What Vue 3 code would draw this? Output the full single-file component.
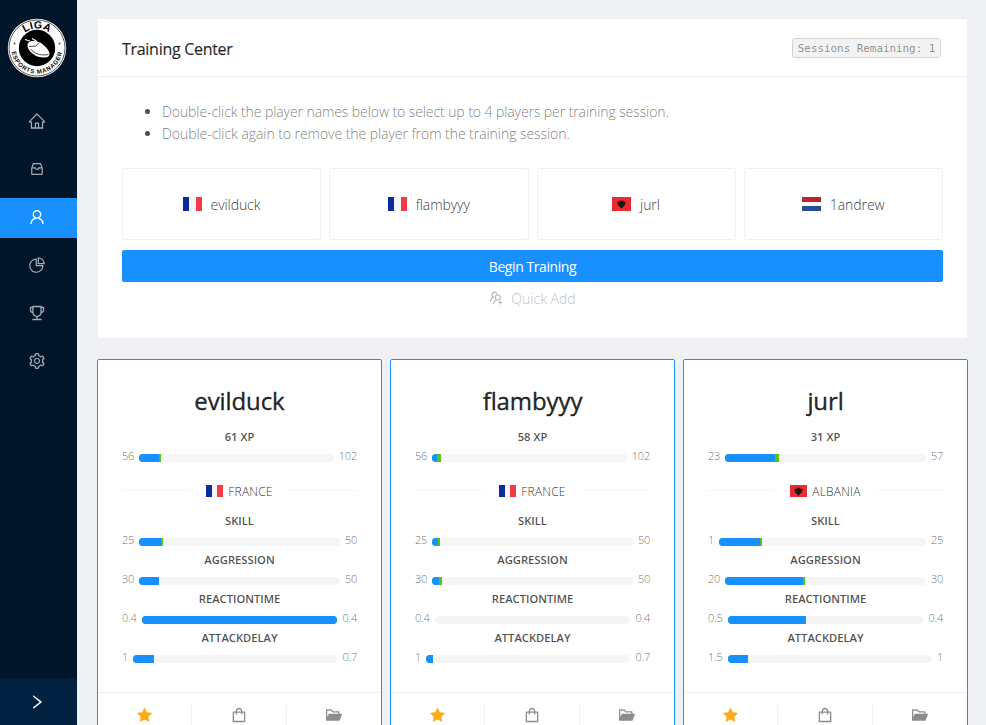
<script setup>
const icons = {
  home: 'M946.5 505L560.1 118.8l-25.9-25.9a31.5 31.5 0 0 0-44.4 0L77.5 505a63.9 63.9 0 0 0-18.8 46c.4 35.2 29.7 63.3 64.9 63.3h42.5V940h691.8V614.3h43.4c17.1 0 33.2-6.7 45.3-18.8a63.6 63.6 0 0 0 18.7-45.3c0-17-6.7-33.1-18.8-45.2zM568 868H456V664h112v204zm217.9-325.7V868H632V640c0-22.1-17.9-40-40-40H432c-22.1 0-40 17.9-40 40v228H238.1V542.3h-96l370-369.7 23.1 23.1L882 542.3h-96.1z',
  inbox: 'M885.2 446.3l-.2-.8-112.2-285.1c-5-16.1-19.9-27.2-36.8-27.2H281.2c-17 0-32.1 11.3-36.9 27.6L139.4 443l-.3.7-.2.8c-1.3 4.9-1.7 9.9-1 14.8-.1 1.6-.2 3.2-.2 4.8V830a60.9 60.9 0 0 0 60.8 60.8h627.2c33.5 0 60.8-27.3 60.9-60.8V464.1c0-1.3 0-2.6-.1-3.7.4-4.9 0-9.6-1.3-14.1zm-295.8-43l-.3 15.7c-.8 44.9-31.8 75.1-77.1 75.1-22.1 0-41.1-7.1-54.8-20.6S436 441.2 435.6 419l-.3-15.7H229.5L309 210h399.2l81.7 193.3H589.4zm-375 76.8h157.3c24.3 57.1 76 90.8 140.4 90.8 33.7 0 65-9.4 90.3-27.2 22.2-15.6 39.5-37.4 50.7-63.6h156.5V814H214.4V480.1z',
  user: 'M858.5 763.6a374 374 0 0 0-80.6-119.5 375.63 375.63 0 0 0-119.5-80.6c-.4-.2-.8-.3-1.2-.5C719.5 518 760 444.7 760 362c0-137-111-248-248-248S264 225 264 362c0 82.7 40.5 156 102.8 201.1-.4.2-.8.3-1.2.5-44.8 18.9-85 46-119.5 80.6a375.63 375.63 0 0 0-80.6 119.5A371.7 371.7 0 0 0 136 901.8a8 8 0 0 0 8 8.2h60c4.4 0 7.9-3.5 8-7.8 2-77.2 33-149.5 87.8-204.3 56.7-56.7 132-87.9 212.2-87.9s155.5 31.2 212.2 87.9C779 752.7 810 825 812 902.2c.1 4.4 3.6 7.8 8 7.8h60a8 8 0 0 0 8-8.2c-1-47.8-10.9-94.3-29.5-138.2zM512 534c-45.9 0-89.1-17.9-121.6-50.4S340 407.9 340 362c0-45.9 17.9-89.1 50.4-121.6S466.1 190 512 190s89.1 17.9 121.6 50.4S684 316.1 684 362c0 45.9-17.9 89.1-50.4 121.6S557.9 534 512 534z',
  pie: 'M864 518H506V160c0-4.4-3.6-8-8-8h-26a398.46 398.46 0 0 0-282.8 117.1 398.19 398.19 0 0 0-85.7 127.1A397.61 397.61 0 0 0 72 552a398.46 398.46 0 0 0 117.1 282.8c36.7 36.7 79.5 65.6 127.1 85.7A397.61 397.61 0 0 0 472 952a398.46 398.46 0 0 0 282.8-117.1c36.7-36.7 65.6-79.5 85.7-127.1A397.61 397.61 0 0 0 872 552v-26c0-4.4-3.6-8-8-8zM705.7 787.8A331.59 331.59 0 0 1 470.4 884c-88.1-.4-170.9-34.9-233.2-97.2C174.5 724.1 140 640.7 140 552c0-88.7 34.5-172.1 97.2-234.8 54.6-54.6 124.9-87.9 200.8-95.5V586h364.3c-7.7 76.3-41.3 147-96.6 201.8zM952 462.4l-2.6-28.2c-8.5-92.1-49.4-179-115.2-244.6A399.4 399.4 0 0 0 589 74.6L560.7 72c-4.7-.4-8.7 3.2-8.7 7.9V464c0 4.4 3.6 8 8 8l384-1c4.7 0 8.4-4 8-8.6zm-332.2-58.2V147.6a332.24 332.24 0 0 1 166.4 89.8c45.7 45.6 77 103.6 90 166.1l-256.4.7z',
  trophy: 'M868 160h-92v-40c0-4.4-3.6-8-8-8H256c-4.4 0-8 3.6-8 8v40h-92a44 44 0 0 0-44 44v148c0 81.7 60 149.6 138.2 162C265.7 630.2 359 721.7 476 734.5v105.2H280c-17.7 0-32 14.3-32 32V904c0 4.4 3.6 8 8 8h512c4.4 0 8-3.6 8-8v-32.3c0-17.7-14.3-32-32-32H548V734.5C665 721.7 758.3 630.2 773.8 514 852 501.6 912 433.7 912 352V204a44 44 0 0 0-44-44zM184 352V232h64v207.6a91.99 91.99 0 0 1-64-87.6zm520 128c0 49.1-19.1 95.4-53.9 130.1-34.8 34.8-81 53.9-130.1 53.9h-16c-49.1 0-95.4-19.1-130.1-53.9-34.8-34.8-53.9-81-53.9-130.1V184h384v296zm136-128c0 41-26.9 75.8-64 87.6V232h64v120z',
  setting: 'M924.8 625.7l-65.5-56c3.1-19 4.7-38.4 4.7-57.8s-1.6-38.8-4.7-57.8l65.5-56a32.03 32.03 0 0 0 9.3-35.2l-.9-2.6a443.74 443.74 0 0 0-79.7-137.9l-1.8-2.1a32.12 32.12 0 0 0-35.1-9.5l-81.3 28.9c-30-24.6-63.5-44-99.7-57.6l-15.7-85a32.05 32.05 0 0 0-25.8-25.7l-2.7-.5c-52.1-9.4-106.9-9.4-159 0l-2.7.5a32.05 32.05 0 0 0-25.8 25.7l-15.8 85.4a351.86 351.86 0 0 0-99 57.4l-81.9-29.1a32 32 0 0 0-35.1 9.5l-1.8 2.1a446.02 446.02 0 0 0-79.7 137.9l-.9 2.6c-4.5 12.5-.8 26.5 9.3 35.2l66.3 56.6c-3.1 18.8-4.6 38-4.6 57.1 0 19.2 1.5 38.4 4.6 57.1L99 625.5a32.03 32.03 0 0 0-9.3 35.2l.9 2.6c18.1 50.4 44.9 96.9 79.7 137.9l1.8 2.1a32.12 32.12 0 0 0 35.1 9.5l81.9-29.1c29.8 24.5 63.1 43.9 99 57.4l15.8 85.4a32.05 32.05 0 0 0 25.8 25.7l2.7.5a449.4 449.4 0 0 0 159 0l2.7-.5a32.05 32.05 0 0 0 25.8-25.7l15.7-85a350 350 0 0 0 99.7-57.6l81.3 28.9a32 32 0 0 0 35.1-9.5l1.8-2.1c34.8-41.1 61.6-87.5 79.7-137.9l.9-2.6c4.5-12.3.8-26.3-9.3-35zM788.3 465.9c2.5 15.1 3.8 30.6 3.8 46.1s-1.3 31-3.8 46.1l-6.6 40.1 74.7 63.9a370.03 370.03 0 0 1-42.6 73.6L721 702.8l-31.4 25.8c-23.9 19.6-50.5 35-79.3 45.8l-38.1 14.3-17.9 97a377.5 377.5 0 0 1-85 0l-17.9-97.2-37.8-14.5c-28.5-10.8-55-26.2-78.7-45.7l-31.4-25.9-93.4 33.2c-17-22.9-31.2-47.6-42.6-73.6l75.5-64.5-6.5-40c-2.4-14.9-3.7-30.3-3.7-45.5 0-15.3 1.2-30.6 3.7-45.5l6.5-40-75.5-64.5c11.3-26.1 25.6-50.7 42.6-73.6l93.4 33.2 31.4-25.9c23.7-19.5 50.2-34.9 78.7-45.7l37.9-14.3 17.9-97.2c28.1-3.2 56.8-3.2 85 0l17.9 97 38.1 14.3c28.7 10.8 55.4 26.2 79.3 45.8l31.4 25.8 92.8-32.9c17 22.9 31.2 47.6 42.6 73.6L781.8 426l6.5 39.9zM512 326c-97.2 0-176 78.8-176 176s78.8 176 176 176 176-78.8 176-176-78.8-176-176-176zm79.2 255.2A111.6 111.6 0 0 1 512 614c-29.9 0-58-11.7-79.2-32.8A111.6 111.6 0 0 1 400 502c0-29.9 11.7-58 32.8-79.2C454 401.6 482.1 390 512 390c29.9 0 58 11.6 79.2 32.8A111.6 111.6 0 0 1 624 502c0 29.9-11.7 58-32.8 79.2z',
  right: 'M765.7 486.8L314.9 134.7A7.97 7.97 0 0 0 302 141v77.3c0 4.9 2.3 9.6 6.1 12.6l360 281.1-360 281.1c-3.9 3-6.1 7.7-6.1 12.6V883c0 6.7 7.7 10.4 12.9 6.3l450.8-352.1a31.96 31.96 0 0 0 0-50.4z',
  usersAdd: 'M892 772h-80v-80c0-4.4-3.6-8-8-8h-48c-4.4 0-8 3.6-8 8v80h-80c-4.4 0-8 3.6-8 8v48c0 4.4 3.6 8 8 8h80v80c0 4.4 3.6 8 8 8h48c4.4 0 8-3.6 8-8v-80h80c4.4 0 8-3.6 8-8v-48c0-4.4-3.6-8-8-8zM373.5 498.4c-.9-8.7-1.4-17.5-1.4-26.4 0-15.9 1.5-31.4 4.3-46.5.7-3.6-1.2-7.3-4.5-8.8-13.6-6.1-26.1-14.5-36.9-25.1a127.54 127.54 0 0 1-38.7-95.4c.9-32.1 13.8-62.6 36.3-85.6 24.7-25.3 57.9-39.1 93.2-38.7 31.9.3 62.7 12.6 86 34.4 7.9 7.4 14.7 15.6 20.4 24.4 2 3.1 5.9 4.4 9.3 3.2 17.6-6.1 36.2-10.4 55.3-12.4 5.6-.6 8.8-6.6 6.3-11.6-32.5-64.3-98.9-108.7-175.7-109.9-110.8-1.7-203.3 89.2-203.3 199.9 0 62.8 28.9 118.8 74.2 155.5-31.8 14.7-61.1 35-86.5 60.4-54.8 54.7-85.8 126.9-87.8 204a8 8 0 0 0 8 8.2h56.1c4.3 0 7.9-3.4 8-7.7 1.9-58 25.4-112.3 66.7-153.5 29.4-29.4 65.4-49.8 104.7-59.7 3.8-1.1 6.4-4.8 5.9-8.7zM824 472c0-109.4-87.9-198.3-196.9-200C516.3 270.3 424 361.2 424 472c0 62.8 29 118.8 74.2 155.5a300.95 300.95 0 0 0-86.4 60.4C357 742.6 326 814.8 324 891.8a8 8 0 0 0 8 8.2h56c4.3 0 7.9-3.4 8-7.7 1.9-58 25.4-112.3 66.7-153.5C505.8 695.7 563 672 624 672c110.4 0 200-89.5 200-200zm-109.5 90.5C690.3 586.7 658.2 600 624 600s-66.3-13.3-90.5-37.5a127.26 127.26 0 0 1-37.5-91.8c.3-32.8 13.4-64.5 36.3-88 24-24.6 56.1-38.3 90.4-38.7 33.9-.3 66.8 12.9 91 36.6 24.8 24.3 38.4 56.8 38.4 91.4-.1 34.2-13.4 66.3-37.6 90.5z',
  star: 'M908.1 353.1l-253.9-36.9L540.7 86.1c-3.1-6.3-8.2-11.4-14.5-14.5-15.8-7.8-35-1.3-42.9 14.5L369.8 316.2l-253.9 36.9c-7 1-13.4 4.3-18.3 9.3a32.05 32.05 0 0 0 .6 45.3l183.7 179.1-43.4 252.9a31.95 31.95 0 0 0 46.4 33.7L512 754l227.1 119.4c6.2 3.3 13.4 4.4 20.3 3.2 17.4-3 29.1-19.5 26.1-36.9l-43.4-252.9 183.7-179.1c5-4.9 8.3-11.3 9.3-18.3 2.7-17.5-9.5-33.7-27-36.3z',
  bag: 'M832 312H696v-16c0-101.6-82.4-184-184-184s-184 82.4-184 184v16H192c-17.7 0-32 14.3-32 32v536c0 17.7 14.3 32 32 32h640c17.7 0 32-14.3 32-32V344c0-17.7-14.3-32-32-32zm-432-16c0-61.9 50.1-112 112-112s112 50.1 112 112v16H400v-16zm392 544H232V384h96v88c0 4.4 3.6 8 8 8h56c4.4 0 8-3.6 8-8v-88h224v88c0 4.4 3.6 8 8 8h56c4.4 0 8-3.6 8-8v-88h96v456z',
  folder: 'M928 444H820V330.4c0-17.7-14.3-32-32-32H473L355.7 186.2a8.15 8.15 0 0 0-5.5-2.2H96c-17.7 0-32 14.3-32 32v592c0 17.7 14.3 32 32 32h698c13 0 24.8-7.9 29.7-20l134-332c1.5-3.8 2.3-7.9 2.3-12 0-17.7-14.3-32-32-32zm-180 0H238c-13 0-24.8 7.9-29.7 20L136 643.2V256h188.5l119.6 114.4H748V444z',
}

const menu = ['home', 'inbox', 'user', 'pie', 'trophy', 'setting']
const active = 'user'

const selected = [
  { name: 'evilduck', flag: 'fr' },
  { name: 'flambyyy', flag: 'fr' },
  { name: 'jurl', flag: 'al' },
  { name: '1andrew', flag: 'nl' },
]

// base: percent filled before training, total: percent including gains
const players = [
  {
    name: 'evilduck', flag: 'fr', country: 'France',
    xp: { label: '61 XP', min: '56', max: '102', base: 10.3, total: 11.3 },
    stats: [
      { label: 'Skill', min: '25', max: '50', base: 11, total: 12 },
      { label: 'Aggression', min: '30', max: '50', base: 10, total: 10 },
      { label: 'ReactionTime', min: '0.4', max: '0.4', base: 100, total: 100 },
      { label: 'AttackDelay', min: '1', max: '0.7', base: 10, total: 10 },
    ],
  },
  {
    name: 'flambyyy', flag: 'fr', country: 'France',
    xp: { label: '58 XP', min: '56', max: '102', base: 2.6, total: 4.6 },
    stats: [
      { label: 'Skill', min: '25', max: '50', base: 3, total: 4 },
      { label: 'Aggression', min: '30', max: '50', base: 3.5, total: 5 },
      { label: 'ReactionTime', min: '0.4', max: '0.4', base: 0, total: 0 },
      { label: 'AttackDelay', min: '1', max: '0.7', base: 3.4, total: 3.4 },
    ],
  },
  {
    name: 'jurl', flag: 'al', country: 'Albania',
    xp: { label: '31 XP', min: '23', max: '57', base: 25, total: 27 },
    stats: [
      { label: 'Skill', min: '1', max: '25', base: 19.8, total: 20.6 },
      { label: 'Aggression', min: '20', max: '30', base: 39, total: 40 },
      { label: 'ReactionTime', min: '0.5', max: '0.4', base: 40.1, total: 40.1 },
      { label: 'AttackDelay', min: '1.5', max: '1', base: 10, total: 10 },
    ],
  },
]
</script>

<template>
  <div class="layout">
    <aside class="sider">
      <svg class="logo" viewBox="0 0 60 60">
        <defs>
          <path id="arc-top" d="M10.500 30a19.500 19.500 0 0 1 39 0" />
          <path id="arc-bottom" d="M4.500 30a25.500 25.500 0 0 0 51 0" />
        </defs>
        <circle cx="30" cy="30" r="29.2" fill="#fff" />
        <circle cx="30" cy="30" r="28" fill="none" stroke="#111" stroke-width=".7" />
        <circle cx="30" cy="30" r="18.2" fill="#000" />
        <text class="logo-top"><textPath href="#arc-top" startOffset="50%" text-anchor="middle">LIGA</textPath></text>
        <text class="logo-bottom"><textPath href="#arc-bottom" startOffset="50%" text-anchor="middle">ESPORTS MANAGER</textPath></text>
        <circle cx="7.500" cy="25.500" r="1" fill="#555" />
        <circle cx="52.500" cy="25.500" r="1" fill="#555" />
        <path d="M20.500 28c-.5-3 2-5 6-5 3 0 7 1 10 4 3 2.500 6 6 6 9 0 2.500-2 3.500-4.500 3.500-5 0-9-1-12.500-4-2.500-2-4.500-4.500-5-7.500z" fill="#fff" />
        <path d="M18 21.500l5 1.500M25 20.500l5 3" fill="none" stroke="#fff" stroke-width="1.200" />
        <path d="M22 28.500l7-.5 3-3.500M23.500 31c3.500 4.500 10 7 18 5.500" fill="none" stroke="#000" stroke-width=".7" />
      </svg>
      <nav class="menu">
        <a v-for="item in menu" :key="item" class="menu-item" :class="[item, { active: item === active }]">
          <svg class="icon" viewBox="64 64 896 896"><path :d="icons[item]" /></svg>
        </a>
      </nav>
      <div class="trigger">
        <svg class="icon" viewBox="64 64 896 896"><path :d="icons.right" /></svg>
      </div>
    </aside>

    <main class="content">
      <section class="panel">
        <header class="panel-head">
          <h1>Training Center</h1>
          <code>Sessions Remaining: 1</code>
        </header>
        <div class="panel-body">
          <ul class="hints">
            <li><span class="hint-a">Double-click the player names below to select up to 4 players per training session.</span></li>
            <li><span class="hint-b">Double-click again to remove the player from the training session.</span></li>
          </ul>
          <div class="slots">
            <div v-for="p in selected" :key="p.name" class="slot">
              <span class="flag" :class="p.flag"><svg v-if="p.flag === 'al'" viewBox="0 0 10 10"><path d="M5 1.500L6 .5l1.500.3L7 2.200 9.800 2 9 3.500l.8.8-1.300.7.3 1.500L7.500 7 6.500 8 5 9.800 3.500 8l-1-1-1.300-.5.3-1.500-1.300-.7.8-.8L.2 2 3 2.200 2.500.8 4 .5z" /></svg></span>
              <span class="slot-name">{{ p.name }}</span>
            </div>
          </div>
          <button class="begin"><span>Begin Training</span></button>
          <button class="quick">
            <svg class="icon" viewBox="64 64 896 896"><path :d="icons.usersAdd" /></svg>
            <span>Quick Add</span>
          </button>
        </div>
      </section>

      <section class="players">
        <article v-for="p in players" :key="p.name" class="player">
          <div class="player-body">
            <h2>{{ p.name }}</h2>
            <div class="stat">
              <div class="stat-label">{{ p.xp.label }}</div>
              <div class="meter">
                <span>{{ p.xp.min }}</span>
                <div class="track">
                  <i class="gain" :style="{ width: p.xp.total + '%' }"></i>
                  <i class="base" :style="{ width: p.xp.base + '%' }"></i>
                </div>
                <span>{{ p.xp.max }}</span>
              </div>
            </div>
            <div class="divider">
              <span class="flag small" :class="p.flag"><svg v-if="p.flag === 'al'" viewBox="0 0 10 10"><path d="M5 1.500L6 .5l1.500.3L7 2.200 9.800 2 9 3.500l.8.8-1.300.7.3 1.500L7.500 7 6.500 8 5 9.800 3.500 8l-1-1-1.300-.5.3-1.500-1.300-.7.8-.8L.2 2 3 2.200 2.500.8 4 .5z" /></svg></span>
              <span class="country">{{ p.country }}</span>
            </div>
            <div v-for="s in p.stats" :key="s.label" class="stat">
              <div class="stat-label">{{ s.label }}</div>
              <div class="meter">
                <span>{{ s.min }}</span>
                <div class="track">
                  <i class="gain" :style="{ width: s.total + '%' }"></i>
                  <i class="base" :style="{ width: s.base + '%' }"></i>
                </div>
                <span>{{ s.max }}</span>
              </div>
            </div>
          </div>
          <footer class="actions">
            <div v-for="a in ['star', 'bag', 'folder']" :key="a" class="action" :class="a">
              <svg class="icon" viewBox="64 64 896 896"><path :d="icons[a]" /></svg>
            </div>
          </footer>
        </article>
      </section>
    </main>
  </div>
</template>

<style>
body {
  overflow: hidden;
  background: #f0f1f5;
}
</style>

<style scoped>
* {
  box-sizing: border-box;
}
.layout {
  display: flex;
  height: 725px;
  overflow: hidden;
  font: 300 14px/22px "Open Sans", "Noto Sans", sans-serif;
  color: rgba(0, 0, 0, 0.7);
  background: #f0f1f5;
}
.icon {
  display: block;
  width: 16px;
  height: 16px;
  fill: currentColor;
}
.sider {
  display: flex;
  flex-direction: column;
  flex: none;
  width: 77px;
  background: #001529;
}
.logo {
  width: 60px;
  height: 60px;
  margin: 18px 0 24px 7px;
}
.logo-top {
  font: 700 10.5px "Liberation Sans", sans-serif;
  letter-spacing: 0.3px;
}
.logo-bottom {
  font: 700 6px "Liberation Sans", sans-serif;
  letter-spacing: 0.7px;
}
.menu {
  display: flex;
  flex-direction: column;
  gap: 8px;
}
.menu-item {
  display: flex;
  align-items: center;
  justify-content: center;
  height: 40px;
  padding: 0 3px 2px 0;
  color: rgba(255, 255, 255, 0.65);
}
.menu-item.inbox .icon {
  width: 14px;
  height: 14px;
}
.menu-item.active {
  color: #fff;
  background: #1890ff;
}
.trigger {
  display: flex;
  align-items: center;
  justify-content: center;
  height: 47px;
  margin-top: auto;
  padding-right: 3px;
  color: #fff;
  background: #002140;
}
.content {
  flex: none;
  width: 871px;
  margin: 18px 0 0 20px;
}
.panel {
  height: 321px;
  border: 1px solid #f0f0f0;
  background: #fff;
}
.panel-head {
  display: flex;
  align-items: center;
  justify-content: space-between;
  height: 58px;
  padding: 0 26px 0 24px;
  border-bottom: 1px solid #f0f0f0;
}
h1 {
  margin: 0;
  padding-top: 2px;
  font-size: 16px;
  font-weight: 500;
  letter-spacing: -0.29px;
  color: rgba(0, 0, 0, 0.85);
  -webkit-text-stroke: 0.2px currentColor;
}
code {
  height: 20px;
  padding: 0 4.7px;
  border: 1px solid #d3d3d3;
  border-radius: 3px;
  font: 400 10.88px/19px "DejaVu Sans Mono", monospace;
  color: rgba(0, 0, 0, 0.45);
  background: #f3f3f3;
}
.panel-body {
  padding: 24px;
}
.hints {
  margin: 0 0 23px;
  padding-left: 40px;
}
.hints span {
  color: rgba(0, 0, 0, 0.55);
}
.hint-a {
  letter-spacing: -0.085px;
}
.hint-b {
  letter-spacing: -0.055px;
}
.slots {
  display: grid;
  grid-template-columns: repeat(4, 1fr);
  gap: 8px;
}
.slot {
  display: flex;
  align-items: center;
  justify-content: center;
  gap: 9px;
  height: 72px;
  border: 1px solid #f0f0f0;
  border-radius: 2px;
}
.slot-name {
  padding-top: 1px;
  letter-spacing: -0.08px;
  color: rgba(0, 0, 0, 0.8);
}
.flag {
  display: flex;
  align-items: center;
  justify-content: center;
  width: 18.67px;
  height: 14px;
}
.flag.small {
  width: 17px;
  height: 12px;
}
.flag.fr {
  background: linear-gradient(90deg, #0a2a9f 33.3%, #f5f5f5 33.3% 66.6%, #f23a48 66.6%);
}
.flag.al {
  background: #ec2a32;
}
.flag.nl {
  background: linear-gradient(#b92532 33.3%, #f8f8f8 33.3% 66.6%, #264f96 66.6%);
}
.flag svg {
  width: 9px;
  height: 9px;
  fill: #221515;
}
button {
  display: flex;
  align-items: center;
  justify-content: center;
  width: 100%;
  height: 32px;
  padding: 0;
  border: 0;
  border-radius: 2px;
  font: inherit;
  background: none;
}
.begin {
  margin-top: 10px;
  padding-top: 1px;
  font-weight: 400;
  letter-spacing: -0.42px;
  color: #fff;
  background: #1890ff;
}
.quick {
  gap: 8px;
  color: rgba(0, 0, 0, 0.3);
}
.quick span {
  padding-top: 1px;
}
.quick .icon {
  width: 14px;
  height: 14px;
}
.players {
  display: grid;
  grid-template-columns: repeat(3, 285px);
  gap: 8px;
  margin-top: 20px;
}
.player {
  border: 1px solid #1890ff;
  border-radius: 2px;
  background: #fff;
}
.player-body {
  height: 332px;
  padding: 23px 24px 24px;
}
h2 {
  margin: 0 0 9px;
  font-size: 24px;
  font-weight: 500;
  letter-spacing: -0.1px;
  line-height: 36px;
  text-align: center;
  color: rgba(0, 0, 0, 0.85);
  -webkit-text-stroke: 0.4px currentColor;
}
.stat {
  height: 39px;
}
.stat-label {
  font-size: 11.2px;
  font-weight: 600;
  line-height: 18px;
  text-align: center;
  text-transform: uppercase;
}
.meter {
  display: flex;
  align-items: center;
  gap: 5.1px;
  height: 21px;
  padding-top: 1px;
}
.meter span {
  font-size: 11px;
  letter-spacing: -0.22px;
  line-height: 18px;
  padding-bottom: 3px;
  color: rgba(0, 0, 0, 0.6);
}
.track {
  display: grid;
  flex: 1;
  height: 8px;
  margin-top: 1px;
  overflow: hidden;
  border-radius: 4px;
  background: #f5f5f5;
}
.track i {
  grid-area: 1 / 1;
  height: 8px;
}
.gain {
  background: #52c41a;
}
.base {
  background: #1890ff;
}
.divider {
  display: flex;
  align-items: center;
  height: 22px;
  margin: 13px 0 10px;
  font-size: 12px;
  color: rgba(0, 0, 0, 0.85);
}
.divider::before,
.divider::after {
  content: "";
  flex: 1;
  height: 1px;
  margin-top: -1px;
  background: #f5f5f5;
}
.divider::before {
  margin-right: 16px;
}
.divider::after {
  margin-left: 16px;
}
.country {
  margin-left: 5px;
  padding-top: 1px;
  letter-spacing: 0.2px;
  text-transform: uppercase;
}
.actions {
  display: grid;
  grid-template-columns: 94px 95px 94px;
  height: 46px;
  border-top: 1px solid #f0f0f0;
}
.action {
  display: flex;
  justify-content: center;
  margin-top: 12px;
  padding-top: 2px;
  border-right: 1px solid #f0f0f0;
  color: rgba(0, 0, 0, 0.45);
}
.action:last-child {
  border-right: 0;
}
.action.star {
  color: #faad14;
}
.action.star .icon {
  width: 15px;
  height: 15px;
  margin-top: 1px;
}
</style>
